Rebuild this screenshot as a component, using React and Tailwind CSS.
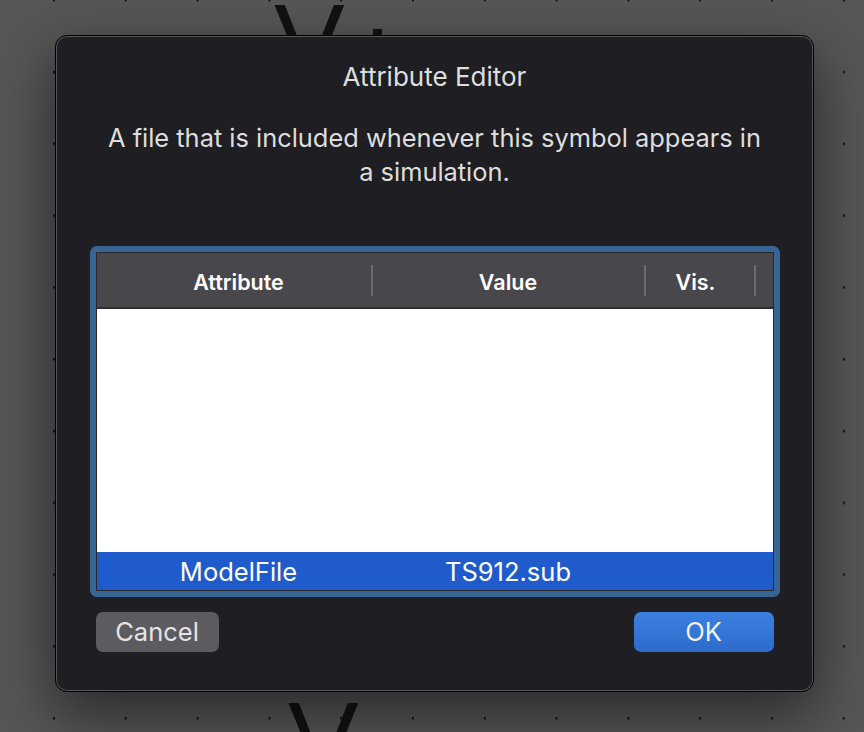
import React from 'react';

const DotGrid = () => (
  <svg className="absolute inset-0" width="864" height="732">
    <defs>
      <pattern id="dots" x="53" y="-1" width="71.8" height="71.8" patternUnits="userSpaceOnUse">
        <rect x="0" y="0" width="2" height="2.5" fill="#141414" />
      </pattern>
    </defs>
    <rect width="864" height="732" fill="url(#dots)" />
  </svg>
);

const Divider = () => <div className="w-[2px] h-[31px] bg-[#6b6a6f]" />;

const AttributeTable = () => (
  <div className="w-[690px] h-[351px] rounded-[7px] bg-[#376594] p-[6px]">
    <div className="h-full flex flex-col border border-[#29292b] bg-white">
      <div className="h-[56px] flex items-center bg-[#48474c] border-b-2 border-[#2d2d30] text-white font-semibold text-[21.5px]">
        <div className="w-[274px] pl-[10px] pt-[5px] text-center">Attribute</div>
        <Divider />
        <div className="w-[271px] pt-[5px] text-center">Value</div>
        <Divider />
        <div className="w-[108px] pr-[8px] pt-[5px] text-center">Vis.</div>
        <Divider />
      </div>
      <div className="flex-1 bg-white" />
      <div className="h-[38px] flex items-center bg-[#1f5bcb] text-white text-[25.5px]">
        <div className="w-[274px] pl-[10px] pt-[2px] text-center">ModelFile</div>
        <div className="w-[2px]" />
        <div className="w-[271px] pt-[2px] text-center">TS912.sub</div>
      </div>
    </div>
  </div>
);

export default function App() {
  return (
    <div
      className="relative w-[864px] h-[732px] overflow-hidden bg-[#575757]"
      style={{ fontFamily: 'Inter, "Noto Sans", sans-serif' }}
    >
      <DotGrid />
      <div className="absolute left-[274px] top-[-12px] text-[106px] leading-none text-[#121212]" style={{ fontFamily: '"Liberation Sans", sans-serif' }}>
        V
      </div>
      <div className="absolute left-[373px] top-[29px] w-[9px] h-[8px] bg-[#121212]" />
      <div className="absolute left-[288px] top-[686px] text-[106px] leading-none text-[#121212]" style={{ fontFamily: '"Liberation Sans", sans-serif' }}>
        V
      </div>

      <div className="relative ml-[55px] mt-[35px] w-[759px] h-[657px] rounded-[12px] border border-black bg-[#1f1f23] shadow-[inset_0_0_0_1px_#56565a,0_22px_60px_4px_rgba(0,0,0,0.5)] flex flex-col items-center">
        <div className="mt-[27px] h-[28px] leading-[28px] text-[26px] text-[#dedede]">Attribute Editor</div>
        <div className="mt-[30px] text-[25.4px] leading-[34px] text-[#dedede] text-center w-[670px]">
          A file that is included whenever this symbol appears in a simulation.
        </div>
        <div className="mt-[57px]">
          <AttributeTable />
        </div>
        <div className="mt-[15px] w-[678px] flex justify-between">
          <button className="w-[123px] h-[40px] rounded-[7px] bg-[#5c5b60] text-[25.5px] text-[#e4e4e4]">Cancel</button>
          <button className="w-[140px] h-[40px] rounded-[7px] bg-gradient-to-b from-[#3b80e0] to-[#2e6bcb] text-[25.5px] text-[#f0f0f0]">OK</button>
        </div>
      </div>
    </div>
  );
}
